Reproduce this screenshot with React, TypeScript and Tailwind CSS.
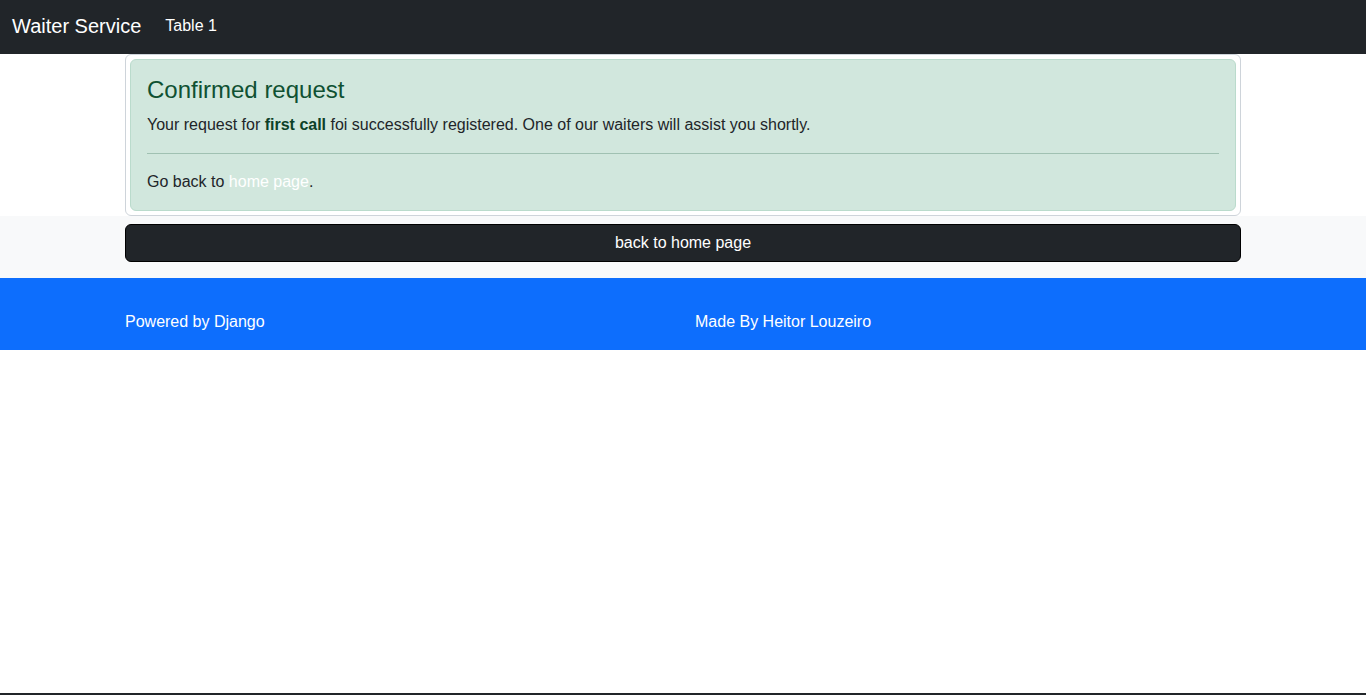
import React from 'react';

export default function App() {
    return (
        <div className="min-h-screen flex flex-col bg-white text-[#212529] text-base leading-6"
             style={{fontFamily: '"Liberation Sans", Arial, sans-serif'}}>
            <nav className="h-[54px] bg-[#212529] flex items-center px-3 pb-[3px]">
                <a className="text-white text-xl leading-[30px] mr-6">Waiter Service</a>
                <a className="text-white">Table 1</a>
            </nav>

            <div className="bg-white">
                <div className="w-[1116px] mx-auto border border-[#ced4da] rounded-md p-1">
                    <div className="bg-[#d1e7dd] border border-[#badbcc] rounded-md p-4">
                        <h4 className="text-2xl leading-[28px] text-[#0f5132] mb-[9px]">Confirmed request</h4>
                        <p>
                            Your request for <strong className="font-bold text-[#0c4128]">first call</strong> foi
                            successfully registered. One of our waiters will assist you shortly.
                        </p>
                        <hr className="my-4 border-t border-[#0f5132]/25"/>
                        <p>Go back to <a className="text-white">home page</a>.</p>
                    </div>
                </div>
            </div>

            <div className="bg-[#f8f9fa] pt-2 pb-4">
                <div className="w-[1116px] mx-auto">
                    <button
                        className="w-full h-[38px] bg-[#212529] border border-black rounded-md text-white">
                        back to home page
                    </button>
                </div>
            </div>

            <footer className="bg-[#0d6efd] pt-8 pb-4">
                <div className="w-[1116px] mx-auto grid grid-cols-2 gap-6 text-white">
                    <div>Powered by Django</div>
                    <div>Made By Heitor Louzeiro</div>
                </div>
            </footer>

            <div className="flex-1 border-b-2 border-[#212529]"/>
        </div>
    );
}
